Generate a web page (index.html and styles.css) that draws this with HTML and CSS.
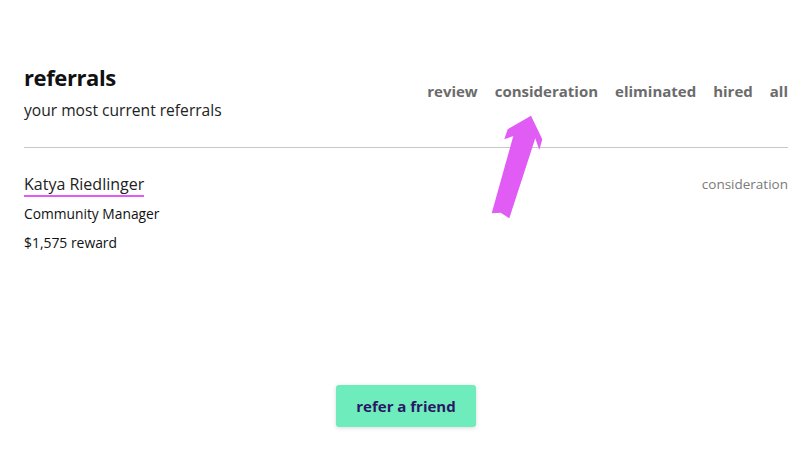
FILE: index.html
```html
<!DOCTYPE html>
<html>
<head>
<meta charset="utf-8">
<link rel="stylesheet" href="styles.css">
</head>
<body>
<div class="page">
  <header class="head">
    <div class="titles">
      <h1 class="title">referrals</h1>
      <p class="subtitle">your most current referrals</p>
    </div>
    <nav class="tabs">
      <span class="tab">review</span>
      <span class="tab">consideration</span>
      <span class="tab">eliminated</span>
      <span class="tab">hired</span>
      <span class="tab">all</span>
    </nav>
  </header>
  <div class="rule"></div>
  <div class="item">
    <div class="info">
      <a class="name">Katya Riedlinger</a>
      <div class="role">Community Manager</div>
      <div class="reward">$1,575 reward</div>
    </div>
    <div class="status">consideration</div>
  </div>
  <div class="actions">
    <button class="btn">refer a friend</button>
  </div>
</div>
<svg class="arrow" width="810" height="450" viewBox="0 0 810 450">
  <polygon fill="#e05cf5" points="531,115.7 542.3,139.3 539.3,150 535.3,138.3 509.3,218.3 500.7,212.7 491.7,213.3 513.3,136 504.3,139.3 507.7,129.3"/>
</svg>
</body>
</html>
```
FILE: styles.css
```css
html, body {
  margin: 0;
  padding: 0;
  background: #ffffff;
}
body {
  font-family: "Open Sans", "Liberation Sans", sans-serif;
  color: #1a1a1a;
  width: 810px;
  height: 450px;
  overflow: hidden;
}
.page {
  padding: 62px 22px 0 24px;
  display: flex;
  flex-direction: column;
}
.head {
  display: flex;
  justify-content: space-between;
  align-items: flex-start;
}
.title {
  margin: 0;
  font-size: 22px;
  font-weight: 700;
  line-height: 30px;
  color: #111;
  letter-spacing: -0.4px;
}
.subtitle {
  margin: 8px 0 0 0;
  font-size: 15.6px;
  line-height: 20px;
  color: #222;
}
.tabs {
  display: flex;
  gap: 17px;
  margin-top: 19px;
}
.tab {
  font-size: 15px;
  font-weight: 700;
  color: #6b6b6b;
  line-height: 20px;
}
.rule {
  height: 1px;
  background: #c8c8c8;
  margin-top: 27px;
}
.item {
  display: flex;
  justify-content: space-between;
  align-items: flex-start;
  margin-top: 26px;
}
.info {
  display: flex;
  flex-direction: column;
}
.name {
  font-size: 16px;
  line-height: 20px;
  color: #222;
  align-self: flex-start;
  border-bottom: 2px solid #e05cf5;
  padding-bottom: 1px;
}
.role {
  font-size: 13.8px;
  line-height: 18px;
  margin-top: 8px;
  color: #111;
}
.reward {
  font-size: 13.9px;
  line-height: 18px;
  margin-top: 11px;
  color: #111;
}
.status {
  font-size: 13.5px;
  color: #7a7a7a;
  line-height: 20px;
}
.actions {
  display: flex;
  justify-content: center;
  margin-top: 133px;
}
.btn {
  width: 140px;
  height: 42px;
  border: none;
  border-radius: 3px;
  background: #6eecbb;
  color: #2a1766;
  font-family: "Open Sans", "Liberation Sans", sans-serif;
  font-size: 15px;
  font-weight: 700;
  box-shadow: 0 1px 4px rgba(0,0,0,0.15);
}
.arrow {
  position: absolute;
  left: 0;
  top: 0;
  pointer-events: none;
}
```
